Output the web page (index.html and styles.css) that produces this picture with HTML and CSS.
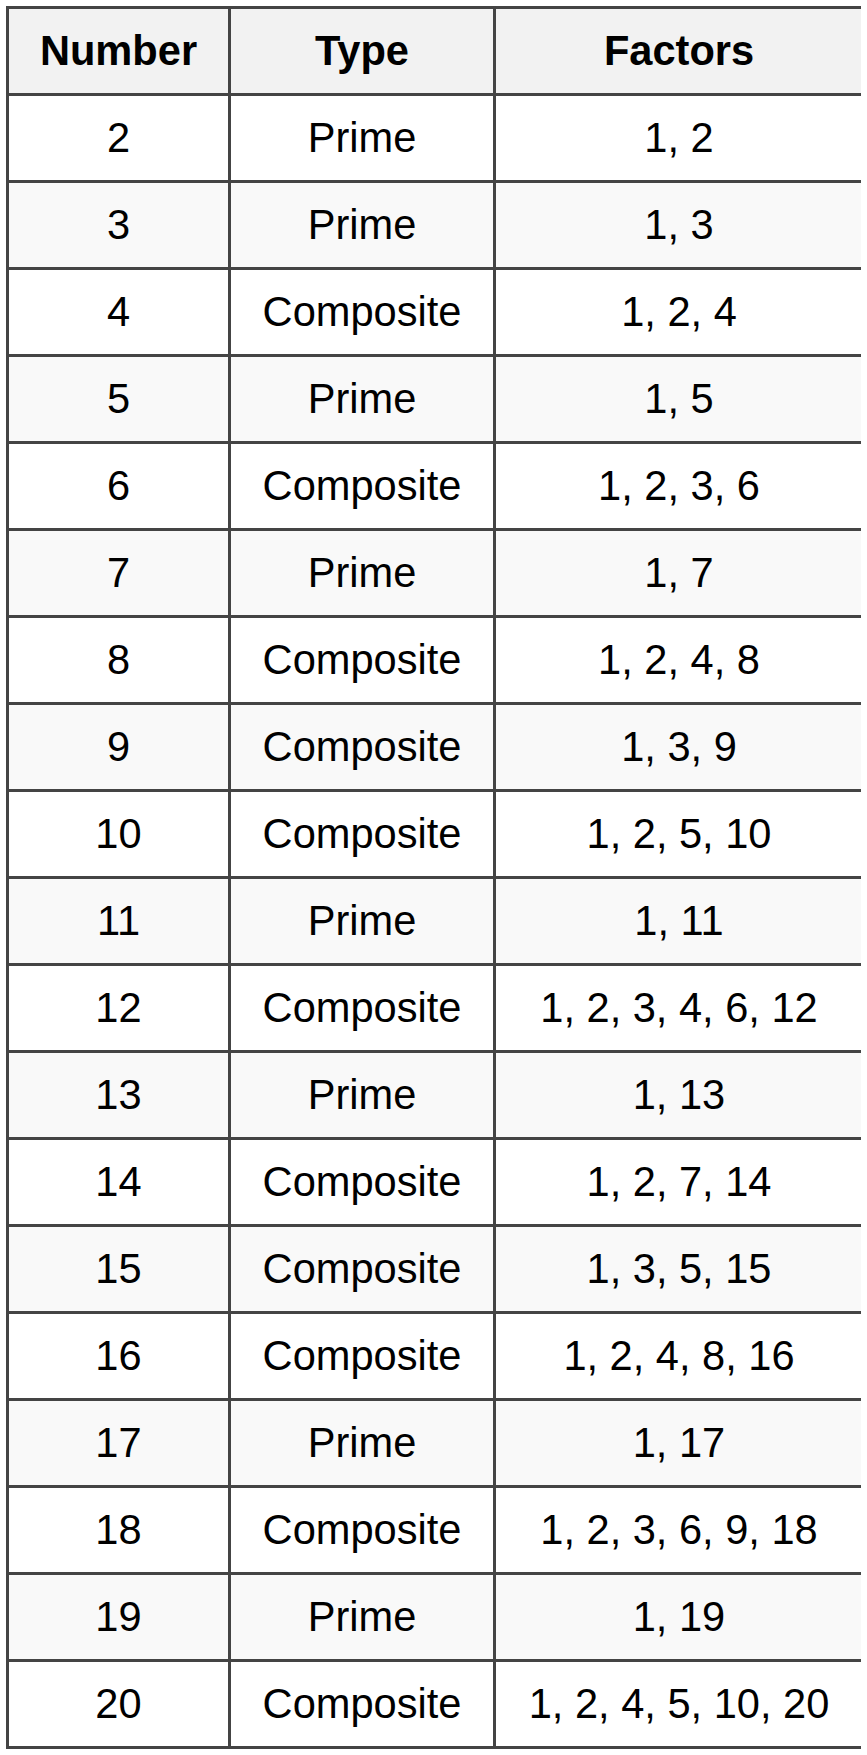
FILE: index.html
```html
<!DOCTYPE html>
<html lang="en">
<head>
<meta charset="utf-8">
<title>Prime and Composite Numbers</title>
<link rel="stylesheet" href="styles.css">
</head>
<body>
<table class="factors-table">
  <colgroup>
    <col class="col-number">
    <col class="col-type">
    <col class="col-factors">
  </colgroup>
  <thead>
    <tr><th>Number</th><th>Type</th><th>Factors</th></tr>
  </thead>
  <tbody>
    <tr><td>2</td><td>Prime</td><td>1, 2</td></tr>
    <tr><td>3</td><td>Prime</td><td>1, 3</td></tr>
    <tr><td>4</td><td>Composite</td><td>1, 2, 4</td></tr>
    <tr><td>5</td><td>Prime</td><td>1, 5</td></tr>
    <tr><td>6</td><td>Composite</td><td>1, 2, 3, 6</td></tr>
    <tr><td>7</td><td>Prime</td><td>1, 7</td></tr>
    <tr><td>8</td><td>Composite</td><td>1, 2, 4, 8</td></tr>
    <tr><td>9</td><td>Composite</td><td>1, 3, 9</td></tr>
    <tr><td>10</td><td>Composite</td><td>1, 2, 5, 10</td></tr>
    <tr><td>11</td><td>Prime</td><td>1, 11</td></tr>
    <tr><td>12</td><td>Composite</td><td>1, 2, 3, 4, 6, 12</td></tr>
    <tr><td>13</td><td>Prime</td><td>1, 13</td></tr>
    <tr><td>14</td><td>Composite</td><td>1, 2, 7, 14</td></tr>
    <tr><td>15</td><td>Composite</td><td>1, 3, 5, 15</td></tr>
    <tr><td>16</td><td>Composite</td><td>1, 2, 4, 8, 16</td></tr>
    <tr><td>17</td><td>Prime</td><td>1, 17</td></tr>
    <tr><td>18</td><td>Composite</td><td>1, 2, 3, 6, 9, 18</td></tr>
    <tr><td>19</td><td>Prime</td><td>1, 19</td></tr>
    <tr><td>20</td><td>Composite</td><td>1, 2, 4, 5, 10, 20</td></tr>
  </tbody>
</table>
</body>
</html>
```

FILE: styles.css
```css
html, body {
  background: #ffffff;
}

body {
  margin: 6px;
  font-family: "Liberation Sans", Arial, sans-serif;
  color: #000000;
}

.factors-table {
  border-collapse: collapse;
  table-layout: fixed;
  width: 856px;
  font-size: 41.6px;
}

.col-number { width: 222px; }
.col-type { width: 265px; }
.col-factors { width: 369px; }

.factors-table th,
.factors-table td {
  border: 3px solid #444444;
  padding: 18px 10px;
  line-height: 48px;
  text-align: center;
  white-space: nowrap;
}

.factors-table th {
  background: #f2f2f2;
  font-weight: bold;
}

.factors-table tbody tr:nth-child(even) td {
  background: #f9f9f9;
}
```
